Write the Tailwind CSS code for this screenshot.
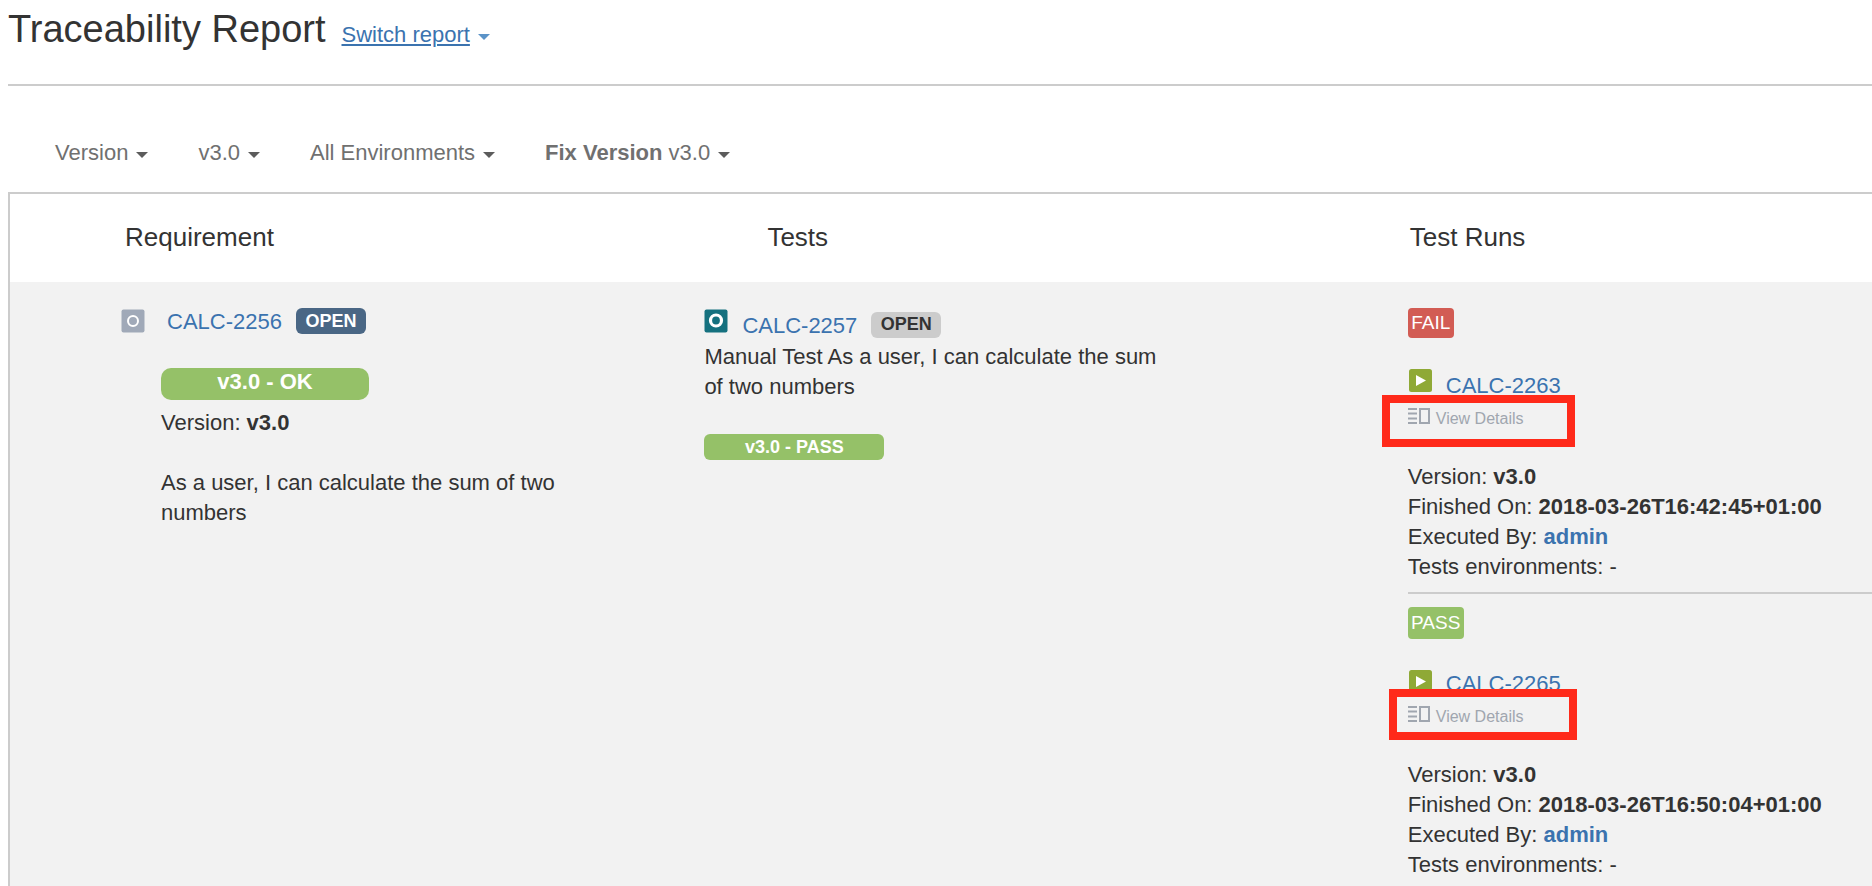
<!DOCTYPE html>
<html lang="en">
<head>
    <meta charset="UTF-8">
    <meta name="viewport" content="width=device-width, initial-scale=1.0">
    <title>Traceability Report</title>
    <script src="https://cdn.jsdelivr.net/npm/@tailwindcss/browser@4"></script>
</head>
<body class="bg-white font-['Liberation_Sans',Arial,sans-serif] text-[22px] leading-[30px] text-[#333]">
    <div class="flex min-h-screen flex-col pl-2">
        <!-- Header -->
        <header class="flex h-[86px] items-baseline gap-4 border-b-2 border-[#ccc] pt-[5px]">
            <h1 class="text-[38px] leading-[48px]">Traceability Report</h1>
            <button type="button" aria-haspopup="true" class="flex items-center gap-2 text-[#3b73af]">
                <span class="underline decoration-2 underline-offset-2">Switch report</span>
                <svg class="mt-1 h-[6px] w-3" viewBox="0 0 12 6" fill="#5b93c8" aria-hidden="true"><path d="M0 0h12L6 6z"/></svg>
            </button>
        </header>

        <!-- Filters -->
        <nav class="flex h-[106px] items-center gap-[50px] pt-7 pl-[47px] text-[#707070]" aria-label="Filters">
            <button type="button" aria-haspopup="true" class="flex items-center gap-2">
                Version
                <svg class="mt-1 h-[6px] w-3" viewBox="0 0 12 6" fill="#5c5c5c" aria-hidden="true"><path d="M0 0h12L6 6z"/></svg>
            </button>
            <button type="button" aria-haspopup="true" class="flex items-center gap-2">
                v3.0
                <svg class="mt-1 h-[6px] w-3" viewBox="0 0 12 6" fill="#5c5c5c" aria-hidden="true"><path d="M0 0h12L6 6z"/></svg>
            </button>
            <button type="button" aria-haspopup="true" class="flex items-center gap-2">
                All Environments
                <svg class="mt-1 h-[6px] w-3" viewBox="0 0 12 6" fill="#5c5c5c" aria-hidden="true"><path d="M0 0h12L6 6z"/></svg>
            </button>
            <button type="button" aria-haspopup="true" class="flex items-center gap-2">
                <span><b>Fix Version</b> v3.0</span>
                <svg class="mt-1 h-[6px] w-3" viewBox="0 0 12 6" fill="#5c5c5c" aria-hidden="true"><path d="M0 0h12L6 6z"/></svg>
            </button>
        </nav>

        <!-- Report -->
        <div class="flex-1 border-t-2 border-l-2 border-[#ccc] bg-[#f2f2f2]">
            <table class="w-full table-fixed">
                <colgroup>
                    <col class="w-[34.5%]">
                    <col class="w-[34.5%]">
                    <col>
                </colgroup>
                <thead class="bg-white text-left text-[26px]">
                    <tr class="h-[88px]">
                        <th scope="col" class="pb-[2px] pl-[115px] font-normal">Requirement</th>
                        <th scope="col" class="pb-[2px] pl-[115px] font-normal">Tests</th>
                        <th scope="col" class="pb-[2px] pl-[115px] font-normal">Test Runs</th>
                    </tr>
                </thead>
                <tbody>
                    <tr class="align-top">
                        <td class="pt-6 pl-[111px]">
                            <div class="flex h-[30px] items-center">
                                <svg class="h-6 w-6" viewBox="0 0 24 24" aria-hidden="true">
                                    <rect x="0.5" y="0.5" width="23" height="23" rx="2" fill="#a0a9b8"/>
                                    <circle cx="12" cy="12" r="5" fill="none" stroke="#fff" stroke-width="2"/>
                                </svg>
                                <a href="#" class="ml-[22px] pt-[2px] text-[#3b73af]">CALC-2256</a>
                                <span class="ml-[14px] h-[26px] w-[70px] rounded-md bg-[#4a6785] text-center text-[18px] leading-[26px] font-bold text-white">OPEN</span>
                            </div>
                            <div class="pl-10">
                                <div class="mt-8 mb-2 h-8 w-[208px] rounded-[10px] bg-[#95c168] text-center leading-7 font-bold text-white">v3.0 - OK</div>
                                <p>Version: <b>v3.0</b></p>
                                <p class="mt-[30px] max-w-[410px]">As a user, I can calculate the sum of two numbers</p>
                            </div>
                        </td>
                        <td class="pt-6 pl-[52px]">
                            <div class="flex h-9 items-start">
                                <svg class="mt-[3px] h-6 w-6" viewBox="0 0 24 24" aria-hidden="true">
                                    <rect x="0.5" y="0.5" width="23" height="23" rx="2" fill="#15717f"/>
                                    <circle cx="12" cy="11.5" r="5.5" fill="none" stroke="#fff" stroke-width="3.2"/>
                                </svg>
                                <a href="#" class="mt-[5px] ml-[14px] text-[#3b73af]">CALC-2257</a>
                                <span class="mt-[6px] ml-[14px] h-[26px] w-[70px] rounded-md bg-[#ccc] text-center text-[18px] leading-6 font-bold">OPEN</span>
                            </div>
                            <p class="max-w-[470px]">Manual Test As a user, I can calculate the sum of two numbers</p>
                            <div class="mt-8 h-[26px] w-[180px] rounded-md bg-[#95c168] text-center text-[18px] leading-[26px] font-bold text-white">v3.0 - PASS</div>
                        </td>
                        <td class="pt-[26px] pl-[113px]">
                            <article>
                                <span class="block h-[30px] w-[46px] rounded-sm bg-[#d25c54] text-center text-[19px] text-white">FAIL</span>
                                <div class="mt-[30px] flex h-[34px] items-start">
                                    <svg class="h-6 w-6" viewBox="0 0 24 24" aria-hidden="true">
                                        <rect x="1" y="1" width="23" height="23" rx="2.5" fill="#8fa936"/>
                                        <path d="M8 7v11l10-5.5z" fill="#fff"/>
                                    </svg>
                                    <a href="#" class="mt-[3px] ml-[14px] text-[#3b73af]">CALC-2263</a>
                                </div>
                                <div class="relative pt-[2px]">
                                    <a href="#" class="flex items-center gap-[5px] text-[16px] text-[#a0a6af]">
                                        <svg class="-mt-[6px] h-4 w-[23px]" viewBox="0 0 23 16" fill="none" stroke="#a0a6af" stroke-width="2" aria-hidden="true">
                                            <path d="M0 1h9M0 5.5h9M0 10.5h9M0 15h9M12 1h9v14h-9z"/>
                                        </svg>
                                        View Details
                                    </a>
                                    <div class="absolute -top-[7px] -left-[26px] h-[52px] w-[193px] border-8 border-[#ff2a1a]"></div>
                                </div>
                                <p class="mt-7">Version: <b>v3.0</b></p>
                                <p>Finished On: <b>2018-03-26T16:42:45+01:00</b></p>
                                <p>Executed By: <a href="#" class="font-bold text-[#3b73af]">admin</a></p>
                                <p>Tests environments: -</p>
                            </article>
                            <hr class="mt-[10px] mb-[13px] border-t-2 border-[#ccc]">
                            <article>
                                <span class="block h-8 w-14 rounded-sm bg-[#95c168] text-center text-[19px] leading-8 text-white">PASS</span>
                                <div class="mt-[30px] flex h-[31px] items-start">
                                    <svg class="h-6 w-6" viewBox="0 0 24 24" aria-hidden="true">
                                        <rect x="1" y="1" width="23" height="23" rx="2.5" fill="#8fa936"/>
                                        <path d="M8 7v11l10-5.5z" fill="#fff"/>
                                    </svg>
                                    <a href="#" class="ml-[14px] text-[#3b73af]">CALC-2265</a>
                                </div>
                                <div class="relative pt-[2px]">
                                    <a href="#" class="flex items-center gap-[5px] text-[16px] text-[#a0a6af]">
                                        <svg class="-mt-[6px] h-4 w-[23px]" viewBox="0 0 23 16" fill="none" stroke="#a0a6af" stroke-width="2" aria-hidden="true">
                                            <path d="M0 1h9M0 5.5h9M0 10.5h9M0 15h9M12 1h9v14h-9z"/>
                                        </svg>
                                        View Details
                                    </a>
                                    <div class="absolute -top-[11px] -left-[19px] h-[51px] w-[188px] border-8 border-[#ff2a1a]"></div>
                                </div>
                                <p class="mt-7">Version: <b>v3.0</b></p>
                                <p>Finished On: <b>2018-03-26T16:50:04+01:00</b></p>
                                <p>Executed By: <a href="#" class="font-bold text-[#3b73af]">admin</a></p>
                                <p>Tests environments: -</p>
                            </article>
                        </td>
                    </tr>
                </tbody>
            </table>
        </div>
    </div>
</body>
</html>
